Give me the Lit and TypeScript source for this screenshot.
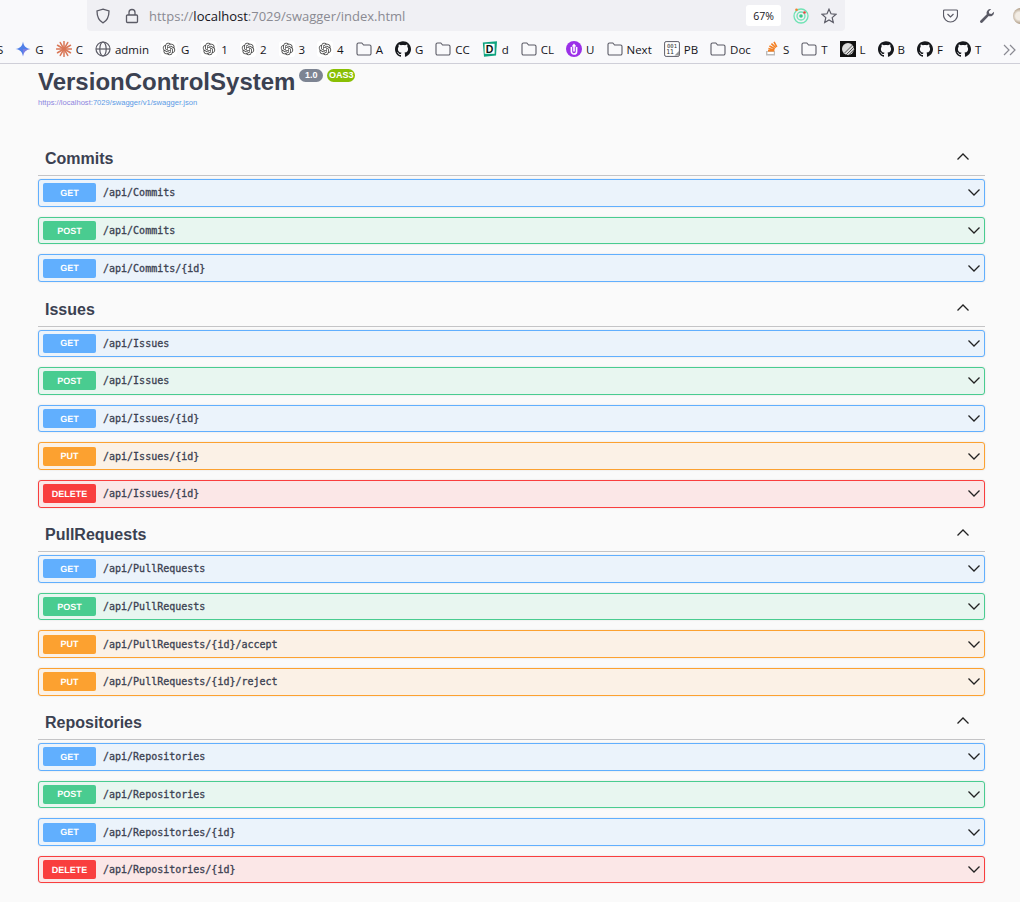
import { css, html, LitElement, svg } from "lit";
import { customElement } from "lit/decorators.js";

type Method = "GET" | "POST" | "PUT" | "DELETE";
type Op = [Method, string];

const TAGS: { name: string; ops: Op[] }[] = [
  {
    name: "Commits",
    ops: [
      ["GET", "/api/Commits"],
      ["POST", "/api/Commits"],
      ["GET", "/api/Commits/{id}"],
    ],
  },
  {
    name: "Issues",
    ops: [
      ["GET", "/api/Issues"],
      ["POST", "/api/Issues"],
      ["GET", "/api/Issues/{id}"],
      ["PUT", "/api/Issues/{id}"],
      ["DELETE", "/api/Issues/{id}"],
    ],
  },
  {
    name: "PullRequests",
    ops: [
      ["GET", "/api/PullRequests"],
      ["POST", "/api/PullRequests"],
      ["PUT", "/api/PullRequests/{id}/accept"],
      ["PUT", "/api/PullRequests/{id}/reject"],
    ],
  },
  {
    name: "Repositories",
    ops: [
      ["GET", "/api/Repositories"],
      ["POST", "/api/Repositories"],
      ["GET", "/api/Repositories/{id}"],
      ["DELETE", "/api/Repositories/{id}"],
    ],
  },
];

const GITHUB =
  "M12 .297c-6.63 0-12 5.373-12 12 0 5.303 3.438 9.8 8.205 11.385.6.113.82-.258.82-.625 0-.299-.01-1.09-.015-2.14-3.338.724-4.042-1.61-4.042-1.61C4.422 18.07 3.633 17.7 3.633 17.7c-1.087-.744.084-.729.084-.729 1.205.084 1.838 1.236 1.838 1.236 1.07 1.835 2.809 1.305 3.495.998.108-.776.417-1.305.76-1.605-2.665-.3-5.466-1.332-5.466-5.93 0-1.31.465-2.38 1.235-3.22-.135-.303-.54-1.523.105-3.176 0 0 1.005-.322 3.3 1.23.96-.267 1.98-.399 3-.405 1.02.006 2.04.138 3 .405 2.28-1.552 3.285-1.23 3.285-1.23.645 1.653.24 2.873.12 3.176.765.84 1.23 1.91 1.23 3.22 0 4.61-2.805 5.625-5.475 5.92.42.36.81 1.096.81 2.22 0 1.606-.015 2.896-.015 3.286 0 .315.21.69.825.57C20.565 22.092 24 17.592 24 12.297c0-6.627-5.373-12-12-12";

const OPENAI =
  "M22.282 9.821a5.985 5.985 0 0 0-.516-4.91 6.046 6.046 0 0 0-6.51-2.9A6.065 6.065 0 0 0 4.981 4.18a5.985 5.985 0 0 0-3.998 2.9 6.046 6.046 0 0 0 .743 7.097 5.98 5.98 0 0 0 .51 4.911 6.051 6.051 0 0 0 6.515 2.9A5.985 5.985 0 0 0 13.26 24a6.056 6.056 0 0 0 5.772-4.206 5.99 5.99 0 0 0 3.997-2.9 6.056 6.056 0 0 0-.747-7.073zM13.26 22.43a4.476 4.476 0 0 1-2.876-1.04l.141-.081 4.779-2.758a.795.795 0 0 0 .392-.681v-6.737l2.02 1.168a.071.071 0 0 1 .038.052v5.583a4.504 4.504 0 0 1-4.494 4.494zM3.6 18.304a4.47 4.47 0 0 1-.535-3.014l.142.085 4.783 2.759a.771.771 0 0 0 .78 0l5.843-3.369v2.332a.08.08 0 0 1-.033.062L9.74 19.95a4.5 4.5 0 0 1-6.14-1.646zM2.34 7.896a4.485 4.485 0 0 1 2.366-1.973V11.6a.766.766 0 0 0 .388.676l5.815 3.355-2.02 1.168a.076.076 0 0 1-.071 0l-4.83-2.786A4.504 4.504 0 0 1 2.34 7.872zm16.597 3.855l-5.833-3.387L15.119 7.2a.076.076 0 0 1 .071 0l4.83 2.791a4.494 4.494 0 0 1-.676 8.105v-5.678a.79.79 0 0 0-.407-.667zm2.01-3.023l-.141-.085-4.774-2.782a.776.776 0 0 0-.785 0L9.409 9.23V6.897a.066.066 0 0 1 .028-.061l4.83-2.787a4.5 4.5 0 0 1 6.68 4.66zm-12.64 4.135l-2.02-1.164a.08.08 0 0 1-.038-.057V6.075a4.5 4.5 0 0 1 7.375-3.453l-.142.08L8.704 5.46a.795.795 0 0 0-.393.681zm1.097-2.365l2.602-1.5 2.607 1.5v2.999l-2.597 1.5-2.607-1.5z";

const ICONS: Record<string, unknown> = {
  gemini: svg`<path fill="#4f7fe8" d="M8 0.5C8.6 5 11 7.4 15.5 8 11 8.6 8.6 11 8 15.5 7.4 11 5 8.6 0.5 8 5 7.4 7.4 5 8 0.5Z"/><path fill="#9a7be0" d="M8 8 15.5 8C11 8.6 8.6 11 8 15.5Z" opacity=".6"/>`,
  claude: svg`<g stroke="#d97757" stroke-width="1.5" stroke-linecap="round">${[0, 30, 60, 90, 120, 150].map(
    (a) => svg`<line x1="8" y1="0.5" x2="8" y2="15.5" transform="rotate(${a} 8 8)"/>`
  )}</g>`,
  globe: svg`<g fill="none" stroke="#5b5b66" stroke-width="1.2"><circle cx="8" cy="8" r="7"/><ellipse cx="8" cy="8" rx="3.2" ry="7"/><path d="M1 8h14"/></g>`,
  openai: svg`<rect width="16" height="16" rx="3" fill="#fff"/><path fill="#444" transform="translate(1.75 1.75) scale(.52)" d="${OPENAI}"/>`,
  folder: svg`<path fill="none" stroke="#5b5b66" stroke-width="1.1" d="M1 3.5A1.5 1.5 0 0 1 2.5 2h3.3l1.8 2h5.9A1.5 1.5 0 0 1 15 5.5v7a1.5 1.5 0 0 1-1.5 1.5h-11A1.5 1.5 0 0 1 1 12.5Z"/>`,
  github: svg`<path fill="#16181c" transform="scale(.6667)" d="${GITHUB}"/>`,
  dub: svg`<path fill="#0fa37f" d="M.8 1.5 15 .3 14 14.5 2 15.7Z"/><rect x="2.6" y="2.8" width="10" height="10" fill="#fff"/><text x="7.6" y="11.8" text-anchor="middle" font-family="Liberation Sans" font-weight="700" font-size="10.5" fill="#111">D</text>`,
  upload: svg`<circle cx="8" cy="8" r="8" fill="#9b30e8"/><path fill="none" stroke="#fff" stroke-width="1.6" d="M5.4 6v4.4a2.6 2.6 0 0 0 5.2 0V6"/><path fill="#fff" d="M8 2.5 10.4 5.6H5.6Z"/><rect x="7.2" y="5" width="1.6" height="5.5" fill="#fff"/>`,
  binary: svg`<rect x=".6" y=".6" width="14.8" height="14.8" rx="1.5" fill="#fff" stroke="#5b5b66"/><text x="8" y="6.6" text-anchor="middle" font-family="DejaVu Sans Mono" font-size="5.6" fill="#333">001</text><text x="6" y="13.4" text-anchor="middle" font-family="DejaVu Sans Mono" font-size="6.4" fill="#333">11</text><path fill="#999" d="M10.5 14.5 15 10v4.5Z"/>`,
  stack: svg`<path fill="#bcbbbb" d="M3 10h9v4.5H3z"/><rect x="4.4" y="10.8" width="6.4" height="2.2" fill="#fff"/><g stroke="#f48024" stroke-width="1.6"><path d="M5 9.8h6.2"/><path d="M5.4 7.6l6 1.4"/><path d="M6.4 5l5.4 2.8"/><path d="M8.4 2.6l4.4 4"/><path d="M11 .8l2.8 5"/></g>`,
  linear: svg`<rect width="16" height="16" fill="#111"/><circle cx="8" cy="8" r="6" fill="#ddd"/><g stroke="#555" stroke-width="1"><path d="M6 14 14 6"/><path d="M8.4 14.4 14.4 8.4"/><path d="M4 12.6 12.6 4"/></g>`,
};

const BOOKMARKS: [string, string][] = [
  ["gemini", "G"],
  ["claude", "C"],
  ["globe", "admin"],
  ["openai", "G"],
  ["openai", "1"],
  ["openai", "2"],
  ["openai", "3"],
  ["openai", "4"],
  ["folder", "A"],
  ["github", "G"],
  ["folder", "CC"],
  ["dub", "d"],
  ["folder", "CL"],
  ["upload", "U"],
  ["folder", "Next"],
  ["binary", "PB"],
  ["folder", "Doc"],
  ["stack", "S"],
  ["folder", "T"],
  ["linear", "L"],
  ["github", "B"],
  ["github", "F"],
  ["github", "T"],
];

@customElement("app-root")
export class AppRoot extends LitElement {
  static styles = css`
    :host {
      display: block;
      width: 1020px;
      height: 902px;
      overflow: hidden;
      background: #fafafa;
      font-family: "Liberation Sans", Arial, sans-serif;
      color: #3b4151;
    }
    .chrome {
      height: 63px;
      background: #f9f9fb;
      border-bottom: 1px solid #cfcfd8;
      overflow: hidden;
    }
    .nav {
      height: 35px;
      display: flex;
      align-items: flex-start;
    }
    .urlbar {
      margin-left: 87px;
      width: 758px;
      height: 31px;
      flex: none;
      box-sizing: border-box;
      background: #f0f0f4;
      border-radius: 0 0 4px 4px;
      display: flex;
      align-items: center;
      padding: 0 8px;
      font: 13px "Open Sans", "Noto Sans", sans-serif;
      color: #8a8a92;
    }
    .urlbar svg {
      flex: none;
    }
    .lock {
      margin-left: 14px;
    }
    .url {
      margin-left: 10px;
      flex: 1;
    }
    .url b {
      font-weight: 400;
      color: #15141a;
    }
    .zoomlevel {
      width: 35px;
      height: 21px;
      background: #fff;
      border-radius: 3px;
      font-size: 10.5px;
      color: #15141a;
      display: flex;
      align-items: center;
      justify-content: center;
    }
    .ext,
    .star {
      margin-left: 12px;
    }
    .tools {
      display: flex;
      align-items: center;
      height: 31px;
      margin-left: 98px;
      gap: 21px;
      flex: none;
    }
    .avatar {
      width: 16px;
      height: 16px;
      margin-left: -3px;
      flex: none;
      border-radius: 50%;
      background: radial-gradient(circle at 40% 50%, #f2ece4 0 30%, #a08a70 70%);
    }
    .bookmarks {
      height: 28px;
      display: flex;
      align-items: center;
      gap: 12px;
      margin-left: -3px;
      font: 11.5px "Open Sans", "Noto Sans", sans-serif;
      color: #15141a;
      white-space: nowrap;
      position: relative;
    }
    .bm {
      display: flex;
      align-items: center;
      gap: 4px;
    }
    .bm svg {
      flex: none;
    }
    .more {
      position: absolute;
      left: 1006px;
      top: 9px;
    }
    main {
      padding: 0 35px 0 38px;
    }
    .info {
      height: 77.6px;
    }
    .title {
      display: flex;
      align-items: flex-start;
      height: 35px;
    }
    h1 {
      margin: 4px 0 0;
      font-size: 24px;
      line-height: 28px;
      font-weight: 700;
    }
    .ver {
      margin: 5px 0 0 4px;
      height: 13px;
      line-height: 13px;
      padding: 0 5.5px;
      border-radius: 7px;
      background: #7d8492;
      color: #fff;
      font-size: 9px;
      font-weight: 700;
    }
    .oas {
      background: #89bf04;
      padding: 0 2px;
    }
    .link {
      font-size: 7.6px;
      line-height: 8px;
      color: #5a9ae6;
      display: block;
    }
    .link i {
      font-style: normal;
      color: #8d86e0;
    }
    .tag {
      height: 34.6px;
      margin-bottom: 3px;
      box-sizing: border-box;
      padding: 2px 16px 0 7px;
      display: flex;
      align-items: center;
      justify-content: space-between;
      border-bottom: 1px solid #c4c4c6;
    }
    .tag svg {
      margin: 0 0 5px;
    }
    h2 {
      margin: 0;
      font-size: 16px;
      font-weight: 700;
    }
    .op {
      box-sizing: border-box;
      height: 27.6px;
      margin-bottom: 10px;
      border: 1px solid;
      border-radius: 3px;
      display: flex;
      align-items: center;
      padding: 0 4.5px 0 4px;
      box-shadow: 0 0 2px rgba(0, 0, 0, 0.12);
    }
    .GET {
      background: #ebf3fb;
      border-color: #61affe;
    }
    .POST {
      background: #e8f6f0;
      border-color: #49cc90;
    }
    .PUT {
      background: #fbf1e6;
      border-color: #fca130;
    }
    .DELETE {
      background: #fbe7e7;
      border-color: #f93e3e;
    }
    .method {
      width: 53px;
      height: 19px;
      border-radius: 2px;
      color: #fff;
      font-size: 9px;
      font-weight: 700;
      text-rendering: geometricPrecision;
      display: flex;
      align-items: center;
      justify-content: center;
      flex: none;
    }
    .GET .method {
      background: #61affe;
    }
    .POST .method {
      background: #49cc90;
    }
    .PUT .method {
      background: #fca130;
    }
    .DELETE .method {
      background: #f93e3e;
    }
    .path {
      margin-left: 7px;
      flex: 1;
      font: 10px "DejaVu Sans Mono", monospace;
      -webkit-text-stroke: 0.3px #3b4151;
      color: #3b4151;
    }
  `;

  private chevron(up: boolean) {
    return html`<svg width="12" height="7" viewBox="0 0 12 7">
      <path
        fill="none"
        stroke="#222"
        stroke-width="1.3"
        d=${up ? "M.5 6.500 6 1 11.500 6.500" : "M.5 .5 6 6 11.500 .5"}
      />
    </svg>`;
  }

  private renderChrome() {
    return html`<div class="chrome">
      <div class="nav">
        <div class="urlbar">
          <svg width="16" height="16" viewBox="0 0 16 16">
            <path
              fill="none"
              stroke="#5b5b66"
              stroke-width="1.3"
              d="M8 1.200 14 3c0 6-1.600 9.600-6 11.800C3.600 12.600 2 9 2 3Z"
            />
          </svg>
          <svg class="lock" width="14" height="16" viewBox="0 0 14 16">
            <path
              fill="none"
              stroke="#5b5b66"
              stroke-width="1.3"
              d="M4 7V4.500a3 3 0 0 1 6 0V7M2.500 7h9a1 1 0 0 1 1 1v5.500a1 1 0 0 1-1 1h-9a1 1 0 0 1-1-1V8a1 1 0 0 1 1-1Z"
            />
          </svg>
          <span class="url">https://<b>localhost</b>:7029/swagger/index.html</span>
          <span class="zoomlevel">67%</span>
          <svg class="ext" width="16" height="16" viewBox="0 0 16 16">
            <g fill="none" stroke="#6fe3b4" stroke-width="1.3">
              <circle cx="8" cy="8" r="7" />
              <circle cx="8" cy="8" r="4" />
            </g>
            <circle cx="8" cy="8" r="1.800" fill="#38c98a" />
            <circle cx="3.500" cy="1.800" r="1.300" fill="#f08030" />
            <circle cx="11.500" cy="4.500" r="1.300" fill="#e8453c" />
          </svg>
          <svg class="star" width="16" height="16" viewBox="0 0 16 16">
            <path
              fill="none"
              stroke="#5b5b66"
              stroke-width="1.2"
              d="M8 1.200 10 5.800l5 .5-3.800 3.300 1.100 4.900L8 12l-4.300 2.500 1.100-4.900L1 6.300l5-.5Z"
            />
          </svg>
        </div>
        <div class="tools">
          <svg width="15" height="14" viewBox="0 0 15 14">
            <path
              fill="none"
              stroke="#5b5b66"
              stroke-width="1.2"
              d="M1.500 1h12a1 1 0 0 1 1 1v4a7 7 0 0 1-14 0V2a1 1 0 0 1 1-1Z"
            />
            <path fill="none" stroke="#5b5b66" stroke-width="1.2" d="M4.500 5 7.500 8 10.500 5" />
          </svg>
          <svg width="16" height="16" viewBox="0 0 16 16">
            <path
              fill="#5b5b66"
              d="M15 3.800a4 4 0 0 1-5.300 4.300L3.500 14.500a1.400 1.400 0 0 1-2-2l6.300-6.200A4 4 0 0 1 12.200 1L9.800 3.400l.4 2.100 2.200.4Z"
            />
          </svg>
          <span class="avatar"></span>
        </div>
      </div>
      <div class="bookmarks">
        <span class="bm"><span>S</span></span>
        ${BOOKMARKS.map(
          ([icon, label]) => html`<span class="bm">
            <svg width="16" height="16" viewBox="0 0 16 16">${ICONS[icon]}</svg>
            <span>${label}</span>
          </span>`
        )}
        <svg class="more" width="14" height="12" viewBox="0 0 14 12">
          <path
            fill="none"
            stroke="#8a8a92"
            stroke-width="1.200"
            d="M1 1l5 5-5 5M7 1l5 5-5 5"
          />
        </svg>
      </div>
    </div>`;
  }

  render() {
    return html`
      ${this.renderChrome()}
      <main>
        <div class="info">
          <div class="title">
            <h1>VersionControlSystem</h1>
            <span class="ver">1.0</span>
            <span class="ver oas">OAS3</span>
          </div>
          <a class="link"><i>https://localhost</i>:7029/swagger/v1/swagger.json</a>
        </div>
        ${TAGS.map(
          (tag) => html`<section>
            <div class="tag">
              <h2>${tag.name}</h2>
              ${this.chevron(true)}
            </div>
            ${tag.ops.map(
              ([method, path]) => html`<div class="op ${method}">
                <span class="method">${method}</span>
                <span class="path">${path}</span>
                ${this.chevron(false)}
              </div>`
            )}
          </section>`
        )}
      </main>
    `;
  }
}
